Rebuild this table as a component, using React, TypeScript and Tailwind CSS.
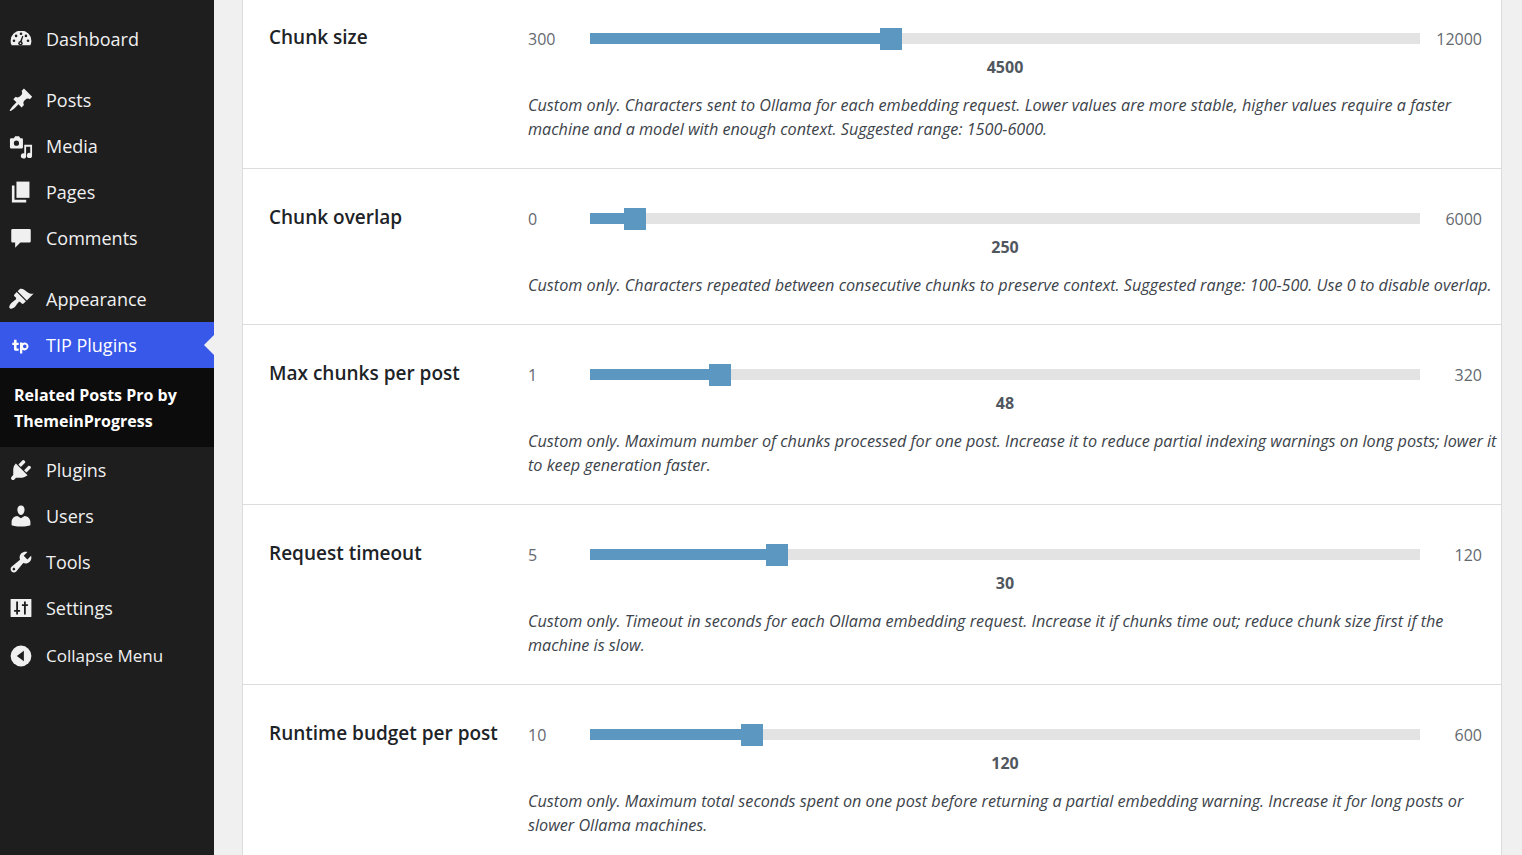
import type { ReactNode } from "react";

type Setting = {
  label: string;
  min: number;
  max: number;
  value: number;
  help: string;
};

const settings: Setting[] = [
  {
    label: "Chunk size",
    min: 300,
    max: 12000,
    value: 4500,
    help: "Custom only. Characters sent to Ollama for each embedding request. Lower values are more stable, higher values require a faster machine and a model with enough context. Suggested range: 1500-6000.",
  },
  {
    label: "Chunk overlap",
    min: 0,
    max: 6000,
    value: 250,
    help: "Custom only. Characters repeated between consecutive chunks to preserve context. Suggested range: 100-500. Use 0 to disable overlap.",
  },
  {
    label: "Max chunks per post",
    min: 1,
    max: 320,
    value: 48,
    help: "Custom only. Maximum number of chunks processed for one post. Increase it to reduce partial indexing warnings on long posts; lower it to keep generation faster.",
  },
  {
    label: "Request timeout",
    min: 5,
    max: 120,
    value: 30,
    help: "Custom only. Timeout in seconds for each Ollama embedding request. Increase it if chunks time out; reduce chunk size first if the machine is slow.",
  },
  {
    label: "Runtime budget per post",
    min: 10,
    max: 600,
    value: 120,
    help: "Custom only. Maximum total seconds spent on one post before returning a partial embedding warning. Increase it for long posts or slower Ollama machines.",
  },
];

const Icon = ({ children }: { children: ReactNode }) => (
  <svg viewBox="0 0 20 20" className="h-[26px] w-[26px] shrink-0" fill="currentColor">
    {children}
  </svg>
);

const icons: Record<string, ReactNode> = {
  dashboard: (
    <Icon>
      <path d="M10 3.5A8 8 0 0 0 2 11.5c0 1.2.3 2.4.8 3.4h14.4c.5-1 .8-2.2.8-3.4a8 8 0 0 0-8-8z" />
      <g fill="#1e1e1e">
        <circle cx="10" cy="6" r="1" />
        <circle cx="6.2" cy="7.6" r="1" />
        <circle cx="13.8" cy="7.6" r="1" />
        <circle cx="4.6" cy="11.3" r="1" />
        <circle cx="15.4" cy="11.3" r="1" />
        <circle cx="9.6" cy="13.2" r="1.7" />
        <path d="M9 12.5l2-5 .8.3-1.6 5.2z" />
      </g>
      <circle cx="9.6" cy="13.2" r="0.6" />
    </Icon>
  ),
  posts: (
    <Icon>
      <path d="M10.44 3.02l1.82-1.82 6.36 6.35-1.83 1.82c-1.05-.68-2.48-.57-3.41.36l-.75.75c-.92.93-1.04 2.35-.35 3.41l-1.83 1.82-2.41-2.41-2.8 2.79c-.42.42-3.38 2.71-3.8 2.29s1.86-3.39 2.28-3.81l2.79-2.79L4.1 9.36l1.83-1.82c1.05.69 2.48.57 3.4-.36l.75-.75c.93-.92 1.05-2.35.36-3.41z" />
    </Icon>
  ),
  media: (
    <Icon>
      <path
        fillRule="evenodd"
        d="M2.5 4h2l1-1.5h3L9.5 4h1a1 1 0 0 1 1 1v6a1 1 0 0 1-1 1h-8a1 1 0 0 1-1-1V5a1 1 0 0 1 1-1zm4 1.8a2 2 0 1 0 0 4 2 2 0 1 0 0-4z"
      />
      <path d="M12.5 9h6v8.3a2 2 0 1 1-1.4-1.9V10.6h-3.2v7a2 2 0 1 1-1.4-1.9z" />
    </Icon>
  ),
  pages: (
    <Icon>
      <path d="M3 5h2v11h9v2H3z" />
      <path d="M6.5 2h10v12.5h-10z" />
    </Icon>
  ),
  comments: (
    <Icon>
      <path d="M3.5 3h13a1 1 0 0 1 1 1v8.5a1 1 0 0 1-1 1H9.5l-4 4v-4h-2a1 1 0 0 1-1-1V4a1 1 0 0 1 1-1z" />
    </Icon>
  ),
  appearance: (
    <Icon>
      <path d="M14.48 11.06L7.41 3.99l1.5-1.5c.5-.56 2.3-.47 3.51.32 1.21.8 1.43 1.28 2.91 2.1 1.18.64 2.45 1.26 4.45.85zm-.71.71L6.7 4.7 4.93 6.47c-.39.39-.39 1.02 0 1.41l1.06 1.06c.39.39.39 1.03 0 1.42-.6.6-1.43 1.11-2.21 1.69-.35.26-.7.53-1.01.84C1.43 14.23.4 16.08 1.4 17.07c.99 1 2.84-.03 4.18-1.36.31-.31.58-.66.85-1.02.57-.78 1.08-1.61 1.69-2.21.39-.39 1.02-.39 1.41 0l1.06 1.06c.39.39 1.02.39 1.41 0z" />
    </Icon>
  ),
  tip: (
    <Icon>
      <path d="M4.6 6h2v2.2h1.6V10H6.6v2.6h1.6v1.8H5.7c-.6 0-1.1-.5-1.1-1.1V10H3.3V8.2h1.3z" />
      <path
        fillRule="evenodd"
        d="M9.2 8.1h1.8v.5a3 3 0 1 1 0 5v3H9.2zm3.7 1.6a1.4 1.4 0 1 0 0 2.8 1.4 1.4 0 1 0 0-2.8z"
      />
    </Icon>
  ),
  plugins: (
    <Icon>
      <path d="M13.11 4.36L9.87 7.6 8 5.73l3.24-3.24c.35-.34 1.05-.2 1.56.32.52.51.66 1.21.31 1.55zm-8 1.77l.91-1.12 9.01 9.01-1.19.84c-.71.71-2.63 1.16-3.82 1.16H6.14L4.9 17.26c-.59.59-1.54.59-2.12 0-.59-.58-.59-1.53 0-2.12l1.24-1.24v-3.88c0-1.13.4-3.19 1.09-3.89zm7.26 3.97l3.24-3.24c.34-.35 1.04-.21 1.55.31.52.51.66 1.21.31 1.55l-3.24 3.25z" />
    </Icon>
  ),
  users: (
    <Icon>
      <path d="M10 9.25c-2.27 0-2.73-3.44-2.73-3.44C7 4.02 7.82 2 9.97 2c2.16 0 2.98 2.02 2.71 3.81 0 0-.41 3.44-2.68 3.44zm0 2.57L12.72 10c2.39 0 4.52 2.33 4.52 4.53v2.49s-3.65 1.13-7.24 1.13c-3.65 0-7.24-1.13-7.24-1.13v-2.49c0-2.25 1.94-4.48 4.47-4.48z" />
    </Icon>
  ),
  tools: (
    <Icon>
      <path d="M16.68 9.77c-1.34 1.34-3.3 1.67-4.95.99l-5.41 6.52c-.99.99-2.59.99-3.58 0s-.99-2.59 0-3.57l6.52-5.42c-.68-1.65-.35-3.61.99-4.95 1.28-1.28 3.12-1.62 4.72-1.06l-2.89 2.89 2.82 2.82 2.86-2.87c.53 1.58.18 3.39-1.08 4.65zM3.81 16.21c.4.39 1.04.39 1.43 0 .4-.4.4-1.04 0-1.43-.39-.4-1.03-.4-1.43 0-.39.39-.39 1.03 0 1.43z" />
    </Icon>
  ),
  settings: (
    <Icon>
      <path d="M2.5 3h15a.5.5 0 0 1 .5.5v13a.5.5 0 0 1-.5.5h-15a.5.5 0 0 1-.5-.5v-13a.5.5 0 0 1 .5-.5z" />
      <g fill="#1e1e1e">
        <path d="M6.3 5h1.4v6.5h1.6v1.4H7.7V15H6.3v-2.1H4.7v-1.4h1.6z" />
        <path d="M12.3 8.5h-1.6V7.1h1.6V5h1.4v2.1h1.6v1.4h-1.6V15h-1.4z" />
      </g>
    </Icon>
  ),
  collapse: (
    <Icon>
      <circle cx="10" cy="10" r="8" />
      <path d="M12.2 6v8L6.8 10z" fill="#1e1e1e" />
    </Icon>
  ),
};

function MenuItem({
  icon,
  label,
  active,
  small,
}: {
  icon: string;
  label: string;
  active?: boolean;
  small?: boolean;
}) {
  return (
    <div
      className={
        active
          ? "relative flex h-[46px] items-center bg-[#3858e9] pl-[8px] text-white"
          : "flex h-[46px] items-center pl-[8px] text-[#f0f0f1]"
      }
    >
      {icons[icon]}
      <span className={small ? "ml-[12px] text-[17px] leading-[26px]" : "ml-[12px] text-[18px] leading-[26px]"}>
        {label}
      </span>
      {active && (
        <span className="absolute right-0 top-1/2 h-0 w-0 -translate-y-1/2 border-y-[10px] border-r-[10px] border-y-transparent border-r-[#f0f0f1]" />
      )}
    </div>
  );
}

function Sidebar() {
  return (
    <div className="w-[214px] shrink-0 bg-[#1e1e1e] pt-[16px]">
      <MenuItem icon="dashboard" label="Dashboard" />
      <div className="h-[15px]" />
      <MenuItem icon="posts" label="Posts" />
      <MenuItem icon="media" label="Media" />
      <MenuItem icon="pages" label="Pages" />
      <MenuItem icon="comments" label="Comments" />
      <div className="h-[15px]" />
      <MenuItem icon="appearance" label="Appearance" />
      <MenuItem icon="tip" label="TIP Plugins" active />
      <div className="h-[79px] bg-[#0c0c0c] px-[14px] pt-[14px] text-[16px] font-bold leading-[26px] text-white">
        Related Posts Pro by ThemeinProgress
      </div>
      <MenuItem icon="plugins" label="Plugins" />
      <MenuItem icon="users" label="Users" />
      <MenuItem icon="tools" label="Tools" />
      <MenuItem icon="settings" label="Settings" />
      <div className="pt-[2px]">
        <MenuItem icon="collapse" label="Collapse Menu" small />
      </div>
    </div>
  );
}

function SliderRow({ s }: { s: Setting }) {
  const frac = (s.value - s.min) / (s.max - s.min);
  const thumbLeft = `calc((100% - 22px) * ${frac})`;
  return (
    <div className="grid grid-cols-[259px_1fr] border-b border-[#dcdcde] pt-[38px] pb-[27px] pl-[26px]">
      <div className="-mt-[1px] text-[19px] font-semibold leading-[22px] text-[#1d2327]">{s.label}</div>
      <div className="pt-[1px]">
        <div className="mr-[19px] flex h-[22px] items-center text-[16px] text-[#646970]">
          <span className="w-[62px] shrink-0">{s.min}</span>
          <div className="relative h-[22px] flex-1">
            <div className="absolute inset-x-0 top-[5px] h-[11px] bg-[#e3e3e3]" />
            <div
              className="absolute left-0 top-[5px] h-[11px] bg-[#5b97c0]"
              style={{ width: `calc(${thumbLeft} + 11px)` }}
            />
            <div className="absolute top-0 h-[22px] w-[22px] bg-[#5b97c0]" style={{ left: thumbLeft }} />
          </div>
          <span className="w-[62px] shrink-0 text-right">{s.max}</span>
        </div>
        <div className="mr-[19px] mt-[5px] flex">
          <span className="w-[62px] shrink-0" />
          <span className="flex-1 text-center text-[16px] font-bold leading-[24px] text-[#50575e]">{s.value}</span>
          <span className="w-[62px] shrink-0" />
        </div>
        <p className="mt-[14px] text-[16.2px] italic leading-[24px] text-[#3c434a]">{s.help}</p>
      </div>
    </div>
  );
}

export default function App() {
  return (
    <div className="flex h-[855px] w-full overflow-hidden bg-[#f0f0f1] font-['Open_Sans',sans-serif]">
      <Sidebar />
      <div className="min-w-0 flex-1 pl-[28px] pr-[20px]">
        <div className="-mt-[11px] border-x border-[#dcdcde] bg-white">
          {settings.map((s) => (
            <SliderRow key={s.label} s={s} />
          ))}
        </div>
      </div>
    </div>
  );
}
